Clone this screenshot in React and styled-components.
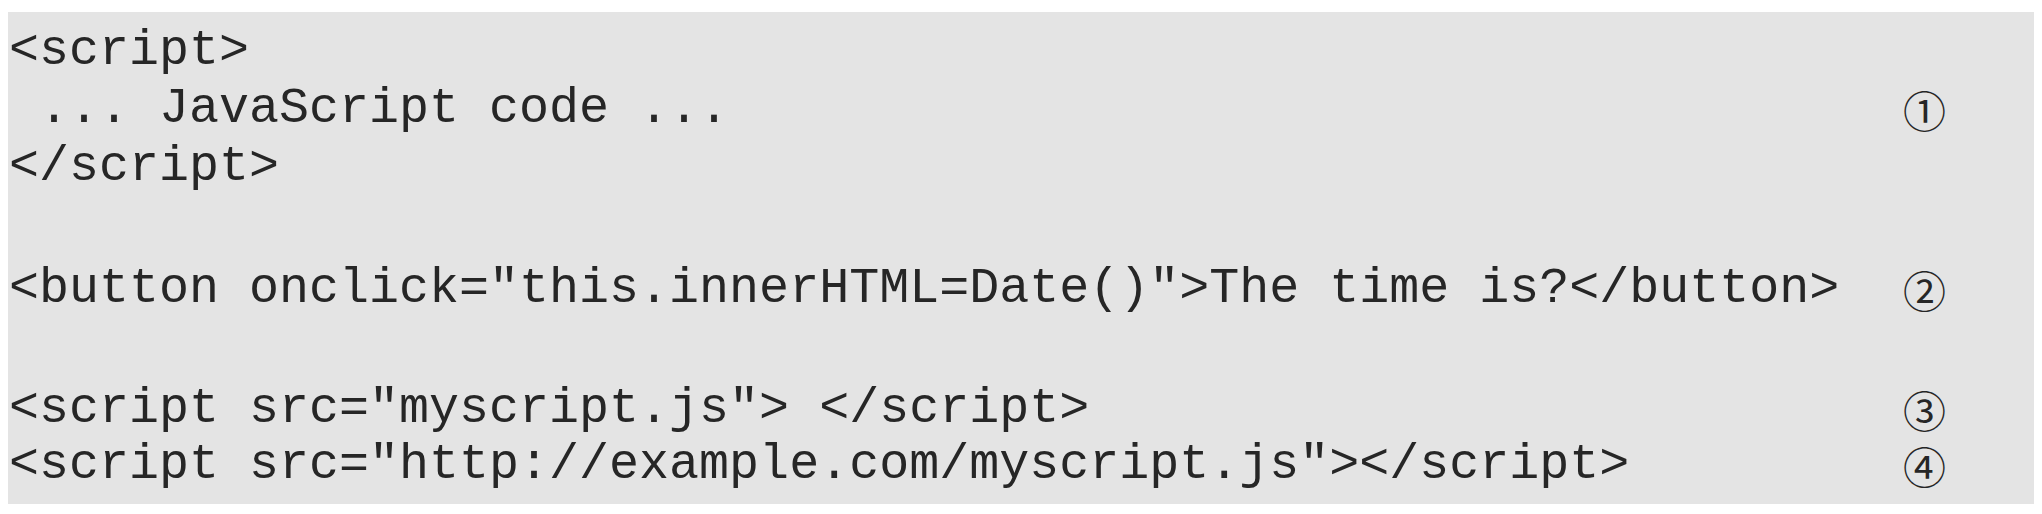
import React from "react";
import styled, { createGlobalStyle } from "styled-components";

const Global = createGlobalStyle`
  html, body { margin: 0; padding: 0; background: #ffffff; }
  body { margin: 8px; }
`;

const CodeBox = styled.div`
  margin-top: 4px;
  background: #e4e4e4;
  padding: 10px 0 0 1px;
  display: flex;
  flex-direction: column;
  height: 492px;
  box-sizing: border-box;
`;

const Row = styled.div`
  display: grid;
  grid-template-columns: 1894px 60px;
  align-items: center;
  height: 58px;
  margin-top: ${(p) => p.$gap || 0}px;
`;

const Code = styled.pre`
  margin: 0;
  font-family: "Liberation Mono", "Courier New", monospace;
  font-size: 50px;
  line-height: 58px;
  color: #262626;
  white-space: pre;
`;

const Marker = styled.span`
  font-family: "Noto Sans CJK JP", "DejaVu Sans", sans-serif;
  font-size: 43px;
  line-height: 58px;
  color: #262626;
`;

const lines = [
  { text: "<script>", gap: 0 },
  { text: " ... JavaScript code ...", gap: 0, mark: "\u2460" },
  { text: "</script>", gap: 0 },
  { text: '<button onclick="this.innerHTML=Date()">The time is?</button>', gap: 64, mark: "\u2461" },
  { text: '<script src="myscript.js"> </script>', gap: 62, mark: "\u2462" },
  { text: '<script src="http://example.com/myscript.js"></script>', gap: -2, mark: "\u2463" },
];

export default function App() {
  return (
    <>
      <Global />
      <CodeBox>
        {lines.map((l, i) => (
          <Row key={i} $gap={l.gap}>
            <Code>{l.text}</Code>
            {l.mark ? <Marker>{l.mark}</Marker> : <span />}
          </Row>
        ))}
      </CodeBox>
    </>
  );
}
